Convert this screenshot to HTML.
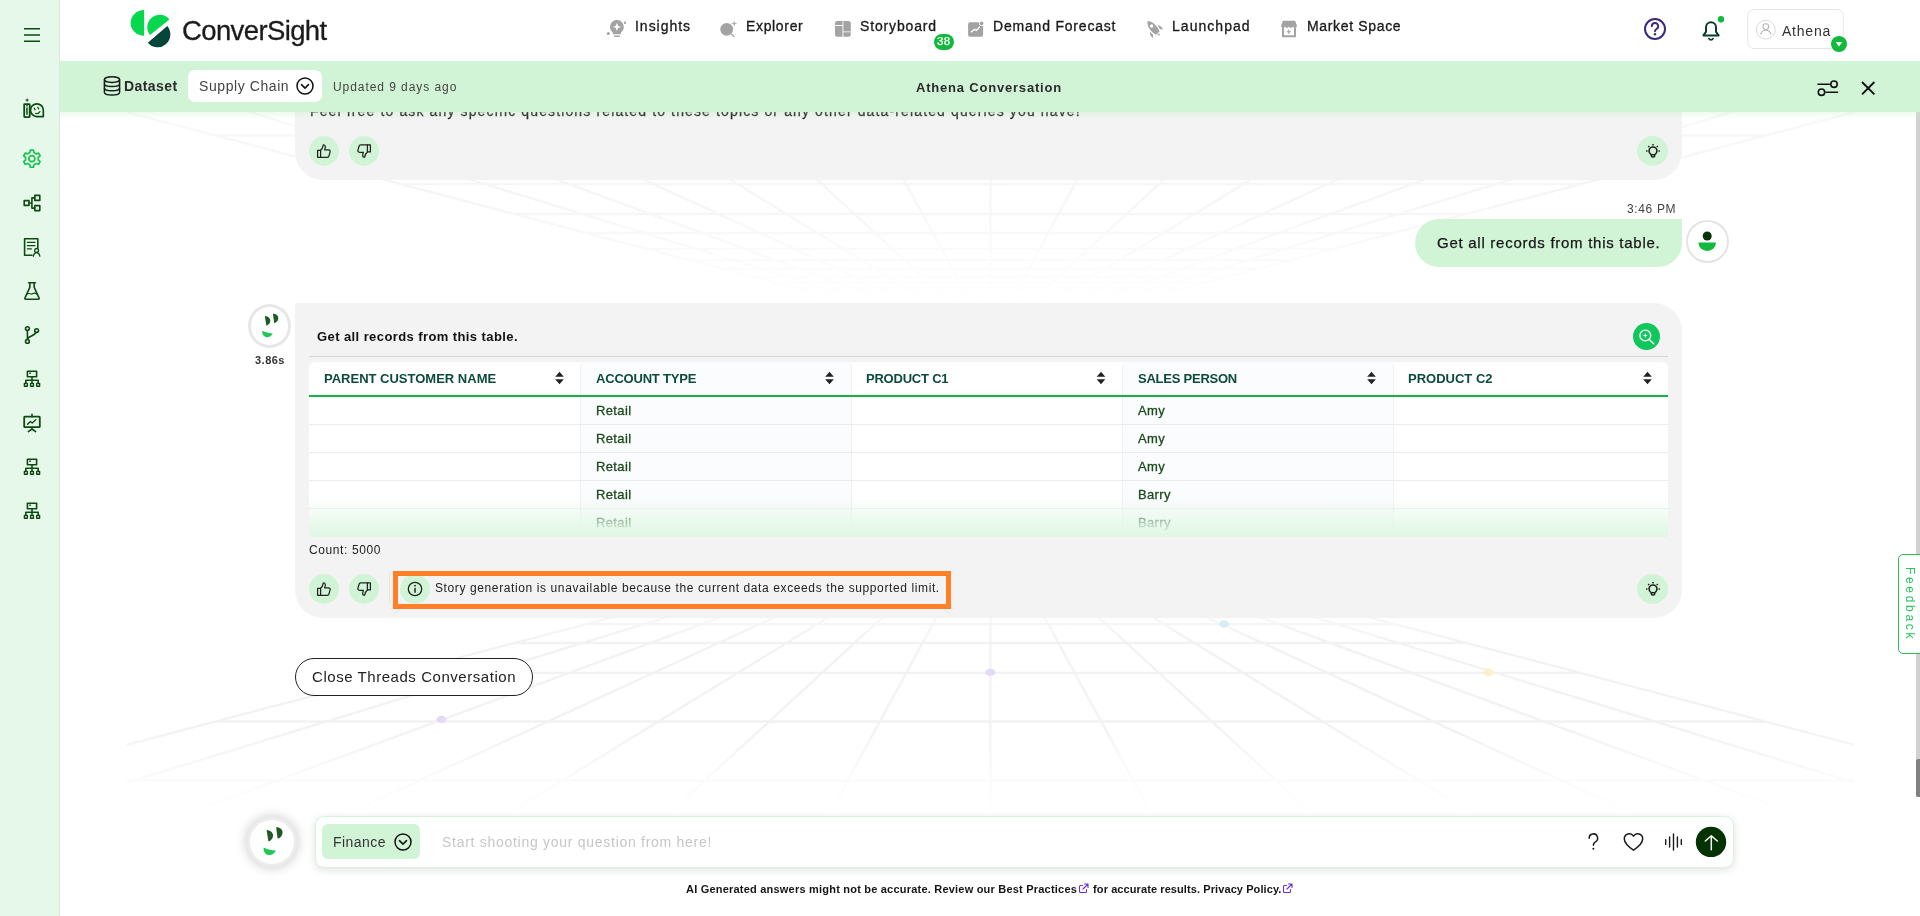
<!DOCTYPE html>
<html lang="en">
<head>
<meta charset="utf-8">
<title>ConverSight - Athena Conversation</title>
<style>
*{box-sizing:border-box;margin:0;padding:0}
html,body{width:1920px;height:916px;overflow:hidden;background:#fff}
body{font-family:"Liberation Sans",sans-serif;color:#222;position:relative}
.abs{position:absolute}
.t{position:absolute;white-space:nowrap;line-height:1;will-change:transform}
#sidebar{z-index:5;position:absolute;left:0;top:0;width:60px;height:916px;background:#e6f8ea;border-right:1px solid #d6eadb}
#header{z-index:4;position:absolute;left:60px;top:0;width:1860px;height:61px;background:#fff}
#subheader{z-index:3;position:absolute;left:60px;top:61px;width:1860px;height:51px;background:#d2f4d6}
#subheader:after{content:"";position:absolute;left:0;top:51px;width:100%;height:10px;background:linear-gradient(to bottom,rgba(196,238,202,.3),rgba(210,244,214,.1) 55%,rgba(210,244,214,0))}
.nav{font-size:14px;color:#1a1a1a;-webkit-text-stroke:.32px #1a1a1a}
.card{position:absolute;background:#f3f3f3}
.circ{position:absolute;border-radius:50%;background:#d2f4d6}
.th{position:absolute;top:362px;height:34px;border-bottom:2px solid #17b04a}
.th span{position:absolute;left:15px;top:10px;font-size:13px;font-weight:bold;color:#0c4a3c;white-space:nowrap;letter-spacing:.2px;line-height:1}
.hd{top:9.600px;font-size:13px;font-weight:bold;color:#0c4a3c;letter-spacing:0}
.td{font-size:13px;color:#1c4a1c;letter-spacing:.36px;-webkit-text-stroke:.3px #1c4a1c}
</style>
</head>
<body>
<!-- background grid -->
<svg class="abs" id="bg" style="left:126.500px;top:112px" width="1727" height="720" viewBox="126.500 112 1727 720">
<defs>
<linearGradient id="gF" x1="0" y1="518" x2="0" y2="828" gradientUnits="userSpaceOnUse"><stop offset="0" stop-color="#000"/><stop offset=".12" stop-color="#000"/><stop offset=".26" stop-color="#555"/><stop offset=".4" stop-color="#fff"/><stop offset=".68" stop-color="#fff"/><stop offset=".85" stop-color="#555"/><stop offset=".96" stop-color="#000"/></linearGradient>
<linearGradient id="gC" x1="0" y1="339" x2="0" y2="99" gradientUnits="userSpaceOnUse"><stop offset="0" stop-color="#000"/><stop offset=".17" stop-color="#111"/><stop offset=".33" stop-color="#666"/><stop offset=".52" stop-color="#ddd"/><stop offset=".65" stop-color="#fff"/><stop offset=".8" stop-color="#ccc"/><stop offset="1" stop-color="#999"/></linearGradient>
<mask id="mF" maskUnits="userSpaceOnUse" x="0" y="500" width="1920" height="340"><rect x="0" y="500" width="1920" height="340" fill="url(#gF)"/></mask>
<mask id="mC" maskUnits="userSpaceOnUse" x="0" y="90" width="1920" height="260"><rect x="0" y="90" width="1920" height="260" fill="url(#gC)"/></mask>
<filter id="bl" x="-2%" y="-2%" width="104%" height="104%"><feGaussianBlur stdDeviation=".65"/></filter>
</defs>
<g fill="none" stroke="#f2f2f2" stroke-width="2.300" filter="url(#bl)">
<path d="M990 518L-198.1 830M990 518L-28.4 830M990 518L141.4 830M990 518L311.1 830M990 518L480.8 830M990 518L650.5 830M990 518L820.3 830M990 518L990 830M990 518L1159.7 830M990 518L1329.5 830M990 518L1499.2 830M990 518L1668.9 830M990 518L1838.6 830M990 518L2008.4 830M990 518L2178.1 830M798.1 568.4H1181.9M776.4 574.1H1203.6M752 580.5H1228M722.3 588.3H1257.7M689.9 596.8H1290.1M646.5 608.2H1333.5M586.4 624H1393.6M514 643H1466M400.5 672.8H1579.5M215.1 721.5H1764.9M-10 780.6H1990" mask="url(#mF)"/>
<path d="M990 339L79.9 100M990 339L209.9 100M990 339L339.9 100M990 339L469.9 100M990 339L600 100M990 339L730 100M990 339L860 100M990 339L990 100M990 339L1120 100M990 339L1250 100M990 339L1380 100M990 339L1510.1 100M990 339L1640.1 100M990 339L1770.1 100M990 339L1900.1 100M798.1 288.6H1181.9M776.4 282.9H1203.6M752 276.5H1228M722.3 268.7H1257.7M689.9 260.2H1290.1M646.5 248.8H1333.5M586.4 233H1393.6M514 214H1466M400.5 184.2H1579.5M215.1 135.5H1764.9M-10 76.4H1990" mask="url(#mC)" opacity=".75"/>
</g>
<ellipse cx="989.800" cy="672.400" rx="5" ry="3.700" fill="#e4daf6"/><ellipse cx="441" cy="719.500" rx="5" ry="3.700" fill="#e4daf6"/><ellipse cx="1223.500" cy="624" rx="5" ry="3.700" fill="#d6edf8"/><ellipse cx="1488" cy="672.300" rx="5" ry="3.700" fill="#f9f0c8"/>
</svg>

<div id="sidebar">
<svg class="abs" style="left:0;top:0" width="60" height="560" viewBox="0 0 60 560" fill="none" stroke="#0d4a10" stroke-width="1.6" stroke-linecap="round" stroke-linejoin="round">
<!-- hamburger -->
<path d="M24 28.8H40M24 35H40M24 41.2H40" stroke-width="1.5" stroke-linecap="butt"/>
<!-- bot / info -->
<g transform="translate(0,109)">
<rect x="24.200" y="-4.900" width="5.500" height="13" rx=".5" stroke-width="1.800"/><path d="M26.950 -1.400v7.200" stroke-width="1.500" stroke-linecap="butt"/><path d="M26.950 -3.900v1.300" stroke-width="1.500" stroke-linecap="butt"/><path d="M27.100 -10.100v2.400M25.900 -8.900h2.400" stroke-width="1"/>
<path d="M36.900 -5.200a6.400 6.400 0 1 0 0 12.800h6.400v-6.400a6.400 6.400 0 0 0-6.400-6.400z" stroke-width="1.700"/><path d="M34.300 -.800l.8 1.500M37.900 -1.600l.8 1.500" stroke-width="1.300"/><path d="M35.600 4.300c1.500 .700 3.300 0 4.300-1.700" stroke-width="1.200"/>
</g>
<!-- gear -->
<g transform="translate(31.900,158.700)" stroke="#16c34c" stroke-width="1.700">
<circle r="3"/>
<path d="M-2.01 -6.18L-1.54 -8.56L1.54 -8.56L2.01 -6.18L4.35 -4.83L6.65 -5.62L8.19 -2.95L6.36 -1.35L6.36 1.35L8.19 2.95L6.65 5.62L4.35 4.83L2.01 6.18L1.54 8.56L-1.54 8.56L-2.01 6.18L-4.35 4.83L-6.65 5.62L-8.19 2.95L-6.36 1.35L-6.36 -1.35L-8.19 -2.95L-6.65 -5.62L-4.35 -4.83Z"/>
</g>
<!-- hierarchy -->
<g transform="translate(0,203)">
<rect x="24.2" y="-2.4" width="4.8" height="4.8"/><rect x="34.8" y="-7.6" width="5" height="5"/><rect x="34.8" y="2.6" width="5" height="5"/>
<path d="M29 0h2.9M31.9 -5.1v10.2M31.9 -5.1h2.9M31.9 5.1h2.9"/>
</g>
<!-- certificate doc -->
<g transform="translate(0,247)">
<path d="M32 8.2H24.6V-8.2H37.8V1"/><path d="M27.4 -4.6h7.6M27.4 -1.4h7.6M27.4 1.8h4" stroke-width="1.3"/>
<circle cx="36.6" cy="3.4" r="1.9" stroke-width="1.3"/><path d="M33.4 9.2c.4-2.6 1.6-3.6 3.2-3.6s2.8 1 3.2 3.6" stroke-width="1.3"/>
</g>
<!-- flask -->
<g transform="translate(0,291)">
<path d="M28.6 -8.2h6.8M29.8 -8.2v4.6L24.9 7.2a.8 .8 0 0 0 .7 1.1h12.8a.8 .8 0 0 0 .7-1.1L34.2 -3.6v-4.6"/><path d="M27.2 3c1.8-1.6 3.4 .9 5.2 -.2s2.400-1.100 4.200.2" stroke-width="1.2"/>
</g>
<!-- git branch -->
<g transform="translate(0,335)">
<circle cx="27.400" cy="-6.4" r="1.9"/><circle cx="27.400" cy="6.4" r="1.9"/><circle cx="36.6" cy="-4.400" r="1.9"/>
<path d="M27.400 -4.500v9M27.400 4.500c0-3.600 7.600-3.400 8.600-7.200"/>
</g>
<!-- sitemap x3 & presentation -->
<g id="smap" transform="translate(0,379)">
<rect x="27.400" y="-7.800" width="9.200" height="5.600"/><path d="M29.600 -5.800h1" stroke-width="1.200"/>
<path d="M32 -2.200v3.400M25.800 4.400v-3.200h12.400v3.200M32 1.200v3.200"/>
<rect x="24.400" y="4.400" width="2.900" height="2.900" stroke-width="1.400"/><rect x="30.550" y="4.400" width="2.900" height="2.900" stroke-width="1.400"/><rect x="36.700" y="4.400" width="2.900" height="2.900" stroke-width="1.400"/>
</g>
<g transform="translate(0,423)">
<rect x="24.200" y="-6.400" width="15.600" height="10.600" rx=".6" stroke-width="1.800"/><path d="M32 -8.600v2.200M32 4.200v2M28.400 8.600l3.600-2.600 3.600 2.600"/><path d="M27.600 1.200l2.800-2.800 1.800 1.600 3.600-3.200" stroke-width="1.400"/>
</g>
<use href="#smap" transform="translate(0,88)"/>
<use href="#smap" transform="translate(0,132)"/>
</svg>
</div>
<div id="header">
<!-- logo -->
<svg class="abs" style="left:60px;top:0" width="120" height="60" viewBox="120 0 120 60">
<path d="M144.100 10.100A13.400 12.850 0 0 0 144.100 35.800Z" fill="#05d84c"/>
<path d="M150 35L169.400 19.400A12.400 12.400 0 0 0 150 35Z" fill="#05d84c"/>
<path d="M147.800 42.700L167.300 26.100A12.800 12.800 0 0 1 147.800 42.700Z" fill="#04473a"/>
</svg>
<div class="t" id="logo" style="left:121.500px;top:16.800px;font-size:27.500px;letter-spacing:-.62px;color:#1b1b1b;-webkit-text-stroke:.3px #1b1b1b">ConverSight</div>
<!-- nav icons -->
<svg class="abs" style="left:540px;top:10px" width="720" height="40" viewBox="600 10 720 40" fill="#a3a3a3">
<!-- insights bulb -->
<path d="M616.900 20a6.900 6.900 0 0 0-4.100 12.400v1.900h8.200v-1.900a6.900 6.900 0 0 0-4.100-12.400z"/><rect x="613.800" y="35.400" width="6.200" height="1.700" rx=".8"/>
<path d="M616.900 22.800l1.100 3 3 1.100-3 1.100-1.100 3-1.100-3-3-1.100 3-1.100z" fill="#fff"/>
<circle cx="608.300" cy="33.500" r="1.500"/><circle cx="625" cy="22.700" r="1.200"/>
<!-- explorer -->
<circle cx="726.700" cy="29.300" r="6.400"/><path d="M730.800 33.600l3.200 3" stroke="#a8a8a8" stroke-width="1.400" stroke-linecap="round"/>
<path d="M734.200 20.300l.7 2.500 2.500 .7-2.500 .7-.7 2.500-.7-2.500-2.500-.7 2.500-.7z" fill="#b0b0b0"/>
<!-- storyboard -->
<path d="M837.500 21.100h5v3.900H835v-1.400a2.500 2.500 0 0 1 2.500-2.500zM835 25.900h7.500v10.800h-5a2.500 2.500 0 0 1-2.500-2.500zM843.400 21.100h4.900a2.500 2.500 0 0 1 2.500 2.500v7.800h-7.400zM843.400 32.300h7.400v1.900a2.500 2.500 0 0 1-2.500 2.500h-4.900z"/>
<!-- demand forecast -->
<rect x="968.100" y="22.200" width="15" height="14.500" rx="2"/><circle cx="981.600" cy="23.400" r="2.300" stroke="#fff" stroke-width="1"/>
<path d="M970.900 32.300l3.800-3.100 1.700 1.200 3.400-3.700" stroke="#fff" stroke-width="1.300" fill="none"/>
<!-- launchpad rocket -->
<g transform="translate(1154.300,29.200) rotate(-40)">
<path d="M0 -10.600C3.200 -7.500 4 -3 3.300 1.500L2.500 5.200H-2.500L-3.300 1.500C-4 -3 -3.200 -7.500 0 -10.600Z"/><path d="M5 -1C6.900 .700 7.300 3.200 6.600 5.900L4.500 3.400ZM-5 -1C-6.900 .700 -7.300 3.200 -6.600 5.900L-4.500 3.400Z"/><path d="M-1.500 6.100H1.500L0 8.400Z"/>
<circle cx="0" cy="-4.200" r="1.700" fill="#fff"/>
</g>
<!-- market space -->
<path d="M1283.600 20.800h10.800a1 1 0 0 1 1 .8l1.500 3.800a2.100 2.100 0 0 1-4 1.200 2.100 2.100 0 0 1-3.900 0 2.100 2.100 0 0 1-3.900 0 2.100 2.100 0 0 1-4-1.200l1.500-3.800a1 1 0 0 1 1-.8z"/><path d="M1283 27.500v8.700h12v-8.700" fill="none" stroke="#a3a3a3" stroke-width="2"/>
<path d="M1288.800 29.600v4.400M1286.600 31.800h4.400" stroke="#a3a3a3" stroke-width="1.100" fill="none"/>
</svg>
<div class="t nav" id="n1" style="left:574.600px;top:18.900px;letter-spacing:.98px">Insights</div>
<div class="t nav" id="n2" style="left:686.300px;top:18.900px;letter-spacing:.66px">Explorer</div>
<div class="t nav" id="n3" style="left:800.400px;top:18.900px;letter-spacing:.85px">Storyboard</div>
<div class="t nav" id="n4" style="left:933.400px;top:18.900px;letter-spacing:.8px">Demand Forecast</div>
<div class="t nav" id="n5" style="left:1112.300px;top:18.900px;letter-spacing:1.04px">Launchpad</div>
<div class="t nav" id="n6" style="left:1246.500px;top:18.900px;letter-spacing:.66px">Market Space</div>
<div class="abs" style="left:874px;top:34.300px;width:20.200px;height:15.400px;border-radius:8px;background:#12b93c"></div>
<div class="t" id="badge" style="left:877px;top:36.300px;font-size:11.500px;color:#fff;letter-spacing:.3px;-webkit-text-stroke:.25px #fff">38</div>
<!-- right icons -->
<svg class="abs" style="left:1570px;top:5px" width="230" height="50" viewBox="1630 5 230 50" fill="none">
<circle cx="1655" cy="29" r="10" stroke="#3a2b7c" stroke-width="2"/>
<path d="M1651.800 26.200a3.200 3.200 0 1 1 4.600 2.900c-1 .5-1.400 1.100-1.400 2.200" stroke="#3a2b7c" stroke-width="1.900" stroke-linecap="round"/><circle cx="1655" cy="34.300" r="1.200" fill="#3a2b7c"/>
<path d="M1711 22.200a5 5 0 0 0-5 5v4.600l-2.600 3.600h15.200l-2.600-3.600v-4.600a5 5 0 0 0-5-5z" stroke="#0b3d2c" stroke-width="2" stroke-linejoin="round"/>
<path d="M1709 38.600a2.200 2.200 0 0 0 4 0" stroke="#0b3d2c" stroke-width="1.800" stroke-linecap="round"/>
<circle cx="1721" cy="19.200" r="3.200" fill="#12b93c"/>
<rect x="1747.800" y="9.500" width="95.500" height="39" rx="6" stroke="#e6e6e6" stroke-width="1" fill="#fff"/>
<circle cx="1765.800" cy="29.700" r="9.400" stroke="#d9d9d9" stroke-width="1" fill="#fff"/>
<circle cx="1765.800" cy="26.600" r="2.900" stroke="#b5b5b5" stroke-width="1.100"/><path d="M1760.600 34.600c.6-3.200 2.600-4.400 5.200-4.400s4.600 1.200 5.200 4.400" stroke="#b5b5b5" stroke-width="1.100"/>
<circle cx="1839" cy="44" r="8" fill="#12b93c"/><path d="M1835.700 42h6.600l-3.300 4.600z" fill="#fff"/>
</svg>
<div class="t" id="uname" style="left:1721.700px;top:24px;font-size:14px;color:#333;letter-spacing:.77px">Athena</div>
</div>
<div id="subheader">
<svg class="abs" style="left:40px;top:12px" width="26" height="26" viewBox="100 73 26 26" fill="none" stroke="#1a1a1a" stroke-width="1.500">
<ellipse cx="112" cy="79.600" rx="7.600" ry="2.800"/><path d="M104.400 79.600v12.600c0 1.600 3.400 2.800 7.600 2.800s7.600-1.200 7.600-2.800V79.600"/><path d="M104.400 83.800c0 1.600 3.400 2.800 7.600 2.800s7.600-1.200 7.600-2.800M104.400 88c0 1.600 3.400 2.800 7.600 2.800s7.600-1.200 7.600-2.800"/>
</svg>
<div class="t" id="ds" style="left:64.400px;top:18.400px;font-size:14px;font-weight:bold;color:#2a2a2a;letter-spacing:.43px">Dataset</div>
<div class="abs" style="left:128px;top:9px;width:134.300px;height:32px;border-radius:7px;background:#fff"></div>
<div class="t" id="sc" style="left:139.400px;top:18.300px;font-size:14px;color:#444;letter-spacing:.58px">Supply Chain</div>
<svg class="abs" style="left:235px;top:15px" width="20" height="20" viewBox="0 0 20 20" fill="none" stroke="#111" stroke-width="1.500" stroke-linecap="round" stroke-linejoin="round"><circle cx="10" cy="10" r="8"/><path d="M6.500 8.600l3.500 3.500 3.500-3.500"/></svg>
<div class="t" id="upd" style="left:272.700px;top:19.600px;font-size:12px;color:#444;letter-spacing:.94px">Updated 9 days ago</div>
<div class="t" id="ac" style="left:855.500px;top:20px;font-size:13px;font-weight:bold;color:#2a2a2a;letter-spacing:.8px">Athena Conversation</div>
<svg class="abs" style="left:1750px;top:14px" width="80" height="26" viewBox="1810 75 80 26" fill="none" stroke="#111" stroke-width="1.600" stroke-linecap="round">
<path d="M1818 84.200h11.500"/><circle cx="1834" cy="84.200" r="3.200"/><circle cx="1821.500" cy="92.200" r="3.200"/><path d="M1826 92.200h11.500"/>
<path d="M1862 82l12.400 12.400M1874.400 82l-12.400 12.400" stroke-width="1.900" stroke-linecap="butt"/>
</svg>
</div>

<div id="main">
<svg width="0" height="0" style="position:absolute"><defs>
<g id="tup" fill="none" stroke="#222" stroke-width="1.250" stroke-linejoin="round" stroke-linecap="round"><path d="M-6.400 -.700h3v7h-3z"/><path d="M-3.700 -.500c1.500-1 2.500-2.600 2.900-5.200 .100-.700 1.900-.500 2.100 1.100 .100 1.100-.200 2.300-.700 3.500h3.900c1.200 0 1.900 .900 1.600 2l-1.200 4.300c-.200 .700-.800 1.100-1.500 1.100h-7.100"/></g>
<g id="tdn" transform="rotate(180)"><use href="#tup"/></g>
<g id="bulb" fill="none" stroke="#1e1e1e" stroke-width="1.600"><circle r="3.900"/><path d="M-1.800 3.500v.9a1.800 1.800 0 0 0 3.600 0v-.9" stroke-width="1.400"/><path d="M0 -5.500V-6.900M-3.800 -3.900l-1 -1M3.800 -3.900l1 -1M-5.500 0H-6.900M5.500 0H6.900" stroke-width="1.500"/></g>
<g id="sort" fill="#222"><path d="M0 -6.200l4.300 5H-4.300z"/><path d="M0 6.200l4.300-5H-4.300z"/></g>
</defs></svg>
<!-- previous answer card (cut off) -->
<div class="card" style="left:295px;top:60px;width:1387px;height:120px;border-radius:0 0 28px 28px"></div>
<div class="t" id="prev" style="left:309.500px;top:103.600px;font-size:14px;color:#111;letter-spacing:1.13px;-webkit-text-stroke:.25px #111">Feel free to ask any specific questions related to these topics or any other data-related queries you have!</div>
<div class="circ" style="left:309px;top:136px;width:30px;height:30px"></div>
<div class="circ" style="left:349px;top:136px;width:30px;height:30px"></div>
<div class="circ" style="left:1637px;top:136px;width:31px;height:30px"></div>
<svg class="abs" style="left:300px;top:130px" width="1380" height="42" viewBox="300 130 1380 42"><use href="#tup" x="324" y="151"/><use href="#tdn" x="364" y="151.200"/><use href="#bulb" x="1653" y="150.900"/></svg>

<!-- user message -->
<div class="t" id="time" style="left:1627px;top:202.600px;font-size:12px;color:#444;letter-spacing:.64px">3:46 PM</div>
<div class="abs" style="left:1415px;top:219px;width:267px;height:48px;border-radius:24px 0 24px 24px;background:#d2f4d6"></div>
<div class="t" id="umsg" style="left:1437px;top:235.200px;font-size:15px;color:#161616;letter-spacing:.73px;-webkit-text-stroke:.25px #161616">Get all records from this table.</div>
<div class="abs" style="left:1686px;top:219.500px;width:43px;height:43px;border-radius:50%;background:#fff;border:2px solid #e4e4e4"></div>
<svg class="abs" style="left:1690px;top:225px" width="34" height="32" viewBox="1690 225 34 32"><circle cx="1707.200" cy="236" r="4.500" fill="#063306"/><path d="M1698.400 242.600h17.600a8.800 8.300 0 0 1-17.600 0z" fill="#12b93c"/></svg>

<!-- bot avatar -->
<div class="abs" style="left:247.500px;top:304px;width:43.500px;height:44px;border-radius:50%;background:#fff;border:3px solid #e7e7e7"></div>
<svg class="abs" style="left:255px;top:310px" width="30" height="32" viewBox="255 310 30 32"><g id="face"><path d="M264.800 315.900C268.500 316.200 270.600 318.600 270.300 321C270 323.400 268.400 325 266.400 325.700Z" fill="#1f5a24"/><path d="M272.900 313.700C276.600 313.700 278.600 316 278.300 318.600C278 321 276.400 322.700 274.200 323.300Z" fill="#1f5a24"/><path d="M262.300 330.800C265.400 332.400 269 333.300 272.700 333.400C271.600 336.200 268.500 337.800 265.700 337C263.300 336.300 262 333.600 262.300 330.800Z" fill="#22c653"/></g></svg>
<div class="t" id="sec" style="left:255px;top:354.700px;font-size:11px;font-weight:bold;color:#333;letter-spacing:.49px">3.86s</div>

<!-- answer card -->
<div class="card" style="left:295px;top:303px;width:1387px;height:314.500px;border-radius:0 28px 28px 28px"></div>
<div class="t" id="qtitle" style="left:317.200px;top:330px;font-size:13px;font-weight:bold;color:#111;letter-spacing:.41px">Get all records from this table.</div>
<div class="abs" style="left:1632.500px;top:322.500px;width:27px;height:27px;border-radius:50%;background:#0fc75b"></div>
<svg class="abs" style="left:1636px;top:326px" width="20" height="20" viewBox="0 0 20 20" fill="none" stroke="#fff" stroke-width="1.500" stroke-linecap="round"><circle cx="9.300" cy="9.500" r="5.400" stroke-width="1.400"/><path d="M13.300 13.500l4.400 4.200" stroke-width="1.400"/><path d="M9.300 8v3M7.800 9.500h3" stroke-width="1"/></svg>
<div class="abs" style="left:309px;top:356px;width:1359px;height:1px;background:#d4d4d4"></div>
<!-- table -->
<div class="abs" id="tbl" style="left:309px;top:362px;width:1359px;height:175px;background:#fff;border-radius:6px 6px 0 0;overflow:hidden">
<div class="abs" style="left:271px;top:0;width:272px;height:175px;background:#fbfcfe;border-left:1px solid #f0f0f0;border-right:1px solid #f0f0f0;border-radius:5px 5px 0 0"></div>
<div class="abs" style="left:813px;top:0;width:272px;height:175px;background:#fbfcfe;border-left:1px solid #f0f0f0;border-right:1px solid #f0f0f0;border-radius:5px 5px 0 0"></div>
<div class="abs" style="left:0;top:33.200px;width:1359px;height:2px;background:#17b142"></div>
<div class="abs" style="left:0;top:62px;width:1359px;height:1px;background:#ececec"></div>
<div class="abs" style="left:0;top:90px;width:1359px;height:1px;background:#ececec"></div>
<div class="abs" style="left:0;top:118px;width:1359px;height:1px;background:#ececec"></div>
<div class="abs" style="left:0;top:146px;width:1359px;height:1px;background:#ececec"></div>
<div class="t hd" id="h1" style="left:15.400px">PARENT CUSTOMER NAME</div>
<div class="t hd" id="h2" style="left:286.600px;letter-spacing:-.2px">ACCOUNT TYPE</div>
<div class="t hd" id="h3" style="left:557.300px;letter-spacing:-.22px">PRODUCT C1</div>
<div class="t hd" id="h4" style="left:828.600px;letter-spacing:-.24px">SALES PERSON</div>
<div class="t hd" id="h5" style="left:1099px">PRODUCT C2</div>
<svg class="abs" style="left:0;top:6.100px" width="1359" height="20" viewBox="0 -10 1359 20"><use href="#sort" x="250.500" y="0"/><use href="#sort" x="520.500" y="0"/><use href="#sort" x="792" y="0"/><use href="#sort" x="1062.500" y="0"/><use href="#sort" x="1338.500" y="0"/></svg>
<div class="t td" style="left:287px;top:42.300px">Retail</div><div class="t td" style="left:829px;top:42.300px">Amy</div>
<div class="t td" style="left:287px;top:70.300px">Retail</div><div class="t td" style="left:829px;top:70.300px">Amy</div>
<div class="t td" style="left:287px;top:98.300px">Retail</div><div class="t td" style="left:829px;top:98.300px">Amy</div>
<div class="t td" style="left:287px;top:126.300px">Retail</div><div class="t td" style="left:829px;top:126.300px">Barry</div>
<div class="t td" style="left:287px;top:154.300px">Retail</div><div class="t td" style="left:829px;top:154.300px">Barry</div>
<div class="abs" style="left:0;top:136px;width:1359px;height:39px;background:linear-gradient(to bottom,rgba(226,248,230,0) 0%,rgba(226,248,230,.4) 35%,rgba(226,248,230,.8) 70%,rgba(224,247,228,1) 100%)"></div>
</div>
<div class="t" id="cnt" style="left:309px;top:544.300px;font-size:12px;color:#222;letter-spacing:.6px">Count: 5000</div>
<!-- action row -->
<div class="circ" style="left:309px;top:574px;width:30px;height:30px"></div>
<div class="circ" style="left:349px;top:574px;width:30px;height:30px"></div>
<div class="circ" style="left:400px;top:574px;width:30px;height:30px"></div>
<div class="circ" style="left:1637px;top:574px;width:31px;height:30px"></div>
<div class="abs" style="left:389px;top:573px;width:1px;height:30px;background:#e4e4e4"></div>
<div class="abs" style="left:393px;top:571px;width:558px;height:38px;border:5px solid #ff7f27"></div>
<svg class="abs" style="left:300px;top:568px" width="1380" height="42" viewBox="300 568 1380 42"><use href="#tup" x="324" y="589"/><use href="#tdn" x="364" y="589.200"/><use href="#bulb" x="1653" y="588.900"/>
<g fill="none" stroke="#222" stroke-width="1.300" stroke-linecap="round"><circle cx="415" cy="589" r="6.700"/><path d="M415 588.400v3.800" stroke-width="1.500"/><circle cx="415" cy="585.700" r=".900" fill="#222" stroke="none"/></g></svg>
<div class="t" id="story" style="left:435px;top:582.100px;font-size:12px;color:#222;letter-spacing:.61px">Story generation is unavailable because the current data exceeds the supported limit.</div>

<!-- close threads -->
<div class="abs" style="left:295px;top:658px;width:238px;height:38px;border-radius:19px;border:1px solid #222;background:#fff"></div>
<div class="t" id="close" style="left:312px;top:669.300px;font-size:15px;color:#222;letter-spacing:.55px">Close Threads Conversation</div>

<!-- input bar -->
<div class="abs" style="left:246.600px;top:816.600px;width:50px;height:50px;border-radius:50%;background:#fff;border:3.300px solid #ececec;box-shadow:0 0 12px 1px rgba(0,0,0,.2)"></div>
<svg class="abs" style="left:254.900px;top:822.600px" width="35.400" height="37.760" viewBox="255 310 30 32"><use href="#face"/></svg>
<div class="abs" style="left:314.500px;top:816px;width:1419px;height:52px;border-radius:9px;background:#fff;border:1px solid #d6f4da;box-shadow:0 2px 8px rgba(0,0,0,.12)"></div>
<div class="abs" style="left:322px;top:824px;width:98px;height:35px;border-radius:6px;background:#d2f4d6"></div>
<div class="t" id="fin" style="left:333.400px;top:835px;font-size:14px;color:#333;letter-spacing:.46px">Finance</div>
<svg class="abs" style="left:392.700px;top:831.600px" width="20" height="20" viewBox="0 0 20 20" fill="none" stroke="#111" stroke-width="1.500" stroke-linecap="round" stroke-linejoin="round"><circle cx="10" cy="10" r="8"/><path d="M6.500 8.600l3.500 3.500 3.500-3.500"/></svg>
<div class="t" id="ph" style="left:441.500px;top:835.200px;font-size:14px;color:#c6c6c6;letter-spacing:.72px">Start shooting your question from here!</div>
<svg class="abs" style="left:1580px;top:822px" width="152" height="40" viewBox="1580 822 152 40" fill="none" stroke="#1a1a1a" stroke-width="1.500" stroke-linecap="round" stroke-linejoin="round">
<path d="M1589.200 838.200a4.200 4.200 0 1 1 6.200 3.600c-1.400 .800-2 1.600-2 3.400"/><circle cx="1593.400" cy="848.700" r="1" fill="#1a1a1a" stroke="none"/>
<path d="M1633.500 850.200c-5-3.400-9.200-7-9.200-11.400a5 5 0 0 1 9.200-2.700 5 5 0 0 1 9.200 2.700c0 4.400-4.200 8-9.200 11.400z"/>
<path d="M1665.700 839.600v4.800M1669.600 837v10M1673.500 834v16M1677.400 837v10M1681.300 839.600v4.800" stroke-width="1.400"/>
<circle cx="1711" cy="841.900" r="15.200" fill="#033303" stroke="none"/><path d="M1711.300 849.800v-13.200M1705.300 841l6-5.200 6 5.200" stroke="#fff" stroke-width="1.500"/>
</svg>
<div class="t" id="foot" style="left:686px;top:883.300px;font-size:11px;font-weight:bold;color:#151515;letter-spacing:.21px">AI Generated answers might not be accurate. Review our Best Practices<svg width="11" height="11" viewBox="0 0 11 11" style="vertical-align:-1px;margin:0 4px 0 1px" fill="none" stroke="#6b2fd6" stroke-width="1.100" stroke-linecap="round" stroke-linejoin="round"><path d="M8.500 6.500v2a1 1 0 0 1-1 1h-5a1 1 0 0 1-1-1v-5a1 1 0 0 1 1-1h2"/><path d="M6.500 1h3.500v3.500M10 1L5 6"/></svg><span style="letter-spacing:.09px">for accurate results. Privacy Policy.</span><svg width="11" height="11" viewBox="0 0 11 11" style="vertical-align:-1px;margin-left:1px" fill="none" stroke="#6b2fd6" stroke-width="1.100" stroke-linecap="round" stroke-linejoin="round"><path d="M8.500 6.500v2a1 1 0 0 1-1 1h-5a1 1 0 0 1-1-1v-5a1 1 0 0 1 1-1h2"/><path d="M6.500 1h3.500v3.500M10 1L5 6"/></svg></div>

<!-- scrollbar -->
<div class="abs" style="left:1916px;top:112px;width:4px;height:685px;background:#d1d1d1"></div>
<div class="abs" style="left:1916px;top:759px;width:5px;height:38px;border-radius:2px 0 0 2px;background:#808080"></div>
<!-- feedback tab -->
<div class="abs" style="left:1898px;top:553.500px;width:26px;height:100px;border:1px solid #22c55a;border-radius:5px;background:#fff"></div>
<div class="t" id="fb" style="left:1904.200px;top:567.300px;font-size:12px;color:#22c55a;letter-spacing:2.680px;writing-mode:vertical-rl">Feedback</div>
</div>
</body>
</html>
